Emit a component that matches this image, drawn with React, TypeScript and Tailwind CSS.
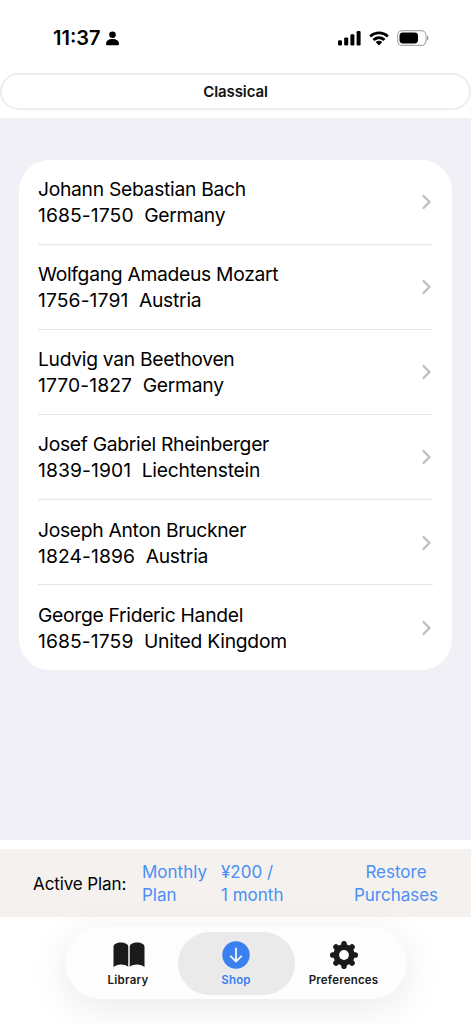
import React from 'react';

type Composer = {
    name: string;
    years: string;
    country: string;
};

const composers: Composer[] = [
    { name: 'Johann Sebastian Bach', years: '1685-1750', country: 'Germany' },
    { name: 'Wolfgang Amadeus Mozart', years: '1756-1791', country: 'Austria' },
    { name: 'Ludvig van Beethoven', years: '1770-1827', country: 'Germany' },
    { name: 'Josef Gabriel Rheinberger', years: '1839-1901', country: 'Liechtenstein' },
    { name: 'Joseph Anton Bruckner', years: '1824-1896', country: 'Austria' },
    { name: 'George Frideric Handel', years: '1685-1759', country: 'United Kingdom' },
];

const StatusBar: React.FC = () => (
    <div className="flex h-[73px] items-start justify-between pl-[53px] pr-[42px] pt-[26px]">
        <div className="flex items-center">
            <span className="w-[53px] whitespace-nowrap text-[20px] font-semibold leading-6">11:37</span>
            <svg className="h-[15px] w-[13px]" viewBox="0 0 13 15">
                <circle cx="6.5" cy="3.8" r="3.3" />
                <path d="M0 13C0 10 2.7 8.1 6.5 8.1S13 10 13 13c0 .8-.4 1.2-1.2 1.2H1.2C.4 14.2 0 13.8 0 13z" />
            </svg>
        </div>
        <div className="flex h-6 items-center">
            <svg className="h-[16px] w-[24px]" viewBox="0 0 24 16">
                <rect x="0" y="10.3" width="4" height="5.2" rx="1.2" />
                <rect x="6.2" y="7.4" width="4" height="8.1" rx="1.2" />
                <rect x="12.4" y="4.3" width="4" height="11.2" rx="1.2" />
                <rect x="18.6" y="1" width="4" height="14.5" rx="1.2" />
            </svg>
            <svg className="ml-[7px] h-[15px] w-[20px]" viewBox="0 0 17 12.3">
                <path d="M8.5 2.6c2.4 0 4.7.9 6.4 2.5.1.1.3.1.5 0l1.2-1.3c.2-.1.2-.4 0-.5C12.1-.9 4.9-.9.4 3.3c-.2.1-.2.4 0 .5l1.2 1.3c.2.1.4.1.5 0C3.8 3.5 6.1 2.6 8.5 2.6zM8.5 6.7c1.3 0 2.6.5 3.5 1.4.2.1.4.1.5 0l1.3-1.3c.1-.2.1-.4 0-.5-3-2.8-7.6-2.8-10.6 0-.1.1-.1.4 0 .5l1.3 1.3c.1.1.4.1.5 0C6 7.2 7.2 6.7 8.5 6.7zM11 9.5c.1-.1.1-.4 0-.5-1.4-1.2-3.6-1.2-5 0-.1.1-.1.4 0 .5l2.3 2.3c.1.1.3.1.4 0z" />
            </svg>
            <svg className="ml-[8px] h-[16px] w-[32px]" viewBox="0 0 32 16">
                <rect x="0.6" y="0.6" width="28.4" height="14.8" rx="4.7" fill="none" stroke="#aaa" strokeWidth="1.1" />
                <rect x="2.5" y="2.5" width="18.5" height="11" rx="3.4" />
                <path d="M30 5.5c1 .4 1.6 1.3 1.6 2.5s-.6 2.1-1.6 2.5z" fill="#999" />
            </svg>
        </div>
    </div>
);

const ComposerRow: React.FC<{ composer: Composer }> = ({ composer }) => (
    <li className="flex h-[85.15px] items-center justify-between border-b border-[#e6e6e6] pr-[1px] pt-[1px] text-[19.3px] leading-[26px] last:border-b-0">
        <div className="whitespace-nowrap">
            <div className="tracking-[-0.3px]">{composer.name}</div>
            <div className="flex gap-[10.5px]">
                <span className="tracking-[0.1px]">{composer.years}</span>
                <span className="tracking-[-0.25px]">{composer.country}</span>
            </div>
        </div>
        <svg className="h-[16px] w-[11px]" viewBox="0 0 11 16" fill="none" stroke="#c0c0c2" strokeWidth="2.4" strokeLinecap="round" strokeLinejoin="round">
            <path d="M2.5 2l6 6-6 6" />
        </svg>
    </li>
);

const PlanBar: React.FC = () => (
    <div className="flex h-[68px] items-center bg-[#f5f1ee] pl-[33px] pt-[2px] text-[17px] leading-[23px] text-[#4b8ff5]">
        <div className="w-[109px] whitespace-nowrap tracking-[-0.1px] text-black">Active Plan:</div>
        <div className="w-[79px]">
            Monthly
            <br />
            Plan
        </div>
        <div className="w-[120px]">
            ¥200 /
            <br />1 month
        </div>
        <div className="w-[110px] text-center">
            Restore
            <br />
            Purchases
        </div>
    </div>
);

const TabBar: React.FC = () => (
    <nav className="ml-[65px] mt-[10px] flex h-[72px] w-[342px] rounded-full bg-[#fdfdfd] p-[4.5px] text-[11.5px] font-semibold leading-[14px] text-[#1a1a1a] shadow-[0_8px_40px_rgba(0,0,0,0.09)]">
        <div className="flex w-[117px] flex-col items-center pt-[10px]">
            <svg className="ml-[2px] h-[26px] w-[32px]" viewBox="0 0 32 26" fill="#1a1a1a">
                <path d="M.5 5C.5 2.4 3.8.6 7.8.6c4.2 0 7.5 1.8 7.5 4.4v19.8c-1.9-1.6-4.3-2.4-7.4-2.4-3 0-5.4.9-7.4 2.5z" />
                <path d="M31.5 5C31.5 2.4 28.2.6 24.2.6c-4.2 0-7.5 1.8-7.5 4.4v19.8c1.9-1.6 4.3-2.4 7.4-2.4 3 0 5.4.9 7.4 2.5z" />
                <path d="M15.3 5h1.4v19h-1.4z" fill="#c9c9c9" />
            </svg>
            <span className="mt-[5px] tracking-[0.25px]">Library</span>
        </div>
        <div className="-ml-[9px] flex w-[117px] flex-col items-center rounded-full bg-[#eaeaea] pt-[9px] text-[#3a80f0]">
            <svg className="h-[28px] w-[28px]" viewBox="0 0 28 28">
                <circle cx="14" cy="14" r="13.7" fill="#3a80f0" />
                <path d="M14 7.5v12.8M8.8 15.3l5.2 5.2 5.2-5.2" fill="none" stroke="#eef3fb" strokeWidth="1.9" strokeLinecap="round" strokeLinejoin="round" />
            </svg>
            <span className="mt-[4px] tracking-[0.2px]">Shop</span>
        </div>
        <div className="-ml-[9px] flex w-[116px] flex-col items-center pt-[9px]">
            <svg className="h-[28px] w-[28px]" viewBox="-14 -14 28 28">
                <g stroke="#1a1a1a" strokeWidth="5.6" strokeLinecap="round">
                    <path d="M0-11.3V11.3M-11.3 0H11.3M-8-8L8 8M8-8L-8 8" />
                </g>
                <circle r="10.7" fill="#1a1a1a" />
                <circle r="4.9" fill="#fdfdfd" />
            </svg>
            <span className="mt-[4px] whitespace-nowrap tracking-[0.2px]">Preferences</span>
        </div>
    </nav>
);

const App: React.FC = () => {
    return (
        <div className="h-[1024px] w-[471px] overflow-hidden bg-white font-['Inter',sans-serif] text-black">
            <StatusBar />
            <div className="flex h-[37px] items-center justify-center rounded-full border-2 border-[#eeeeee] pt-[2px] text-[15px] font-semibold tracking-[-0.1px] text-[#111]">
                Classical
            </div>
            <main className="mt-[8px] h-[722px] bg-[#f1f0f6] px-[19px] pt-[41.5px]">
                <ul className="rounded-[31px] bg-white px-[19px]">
                    {composers.map((composer) => (
                        <ComposerRow key={composer.name} composer={composer} />
                    ))}
                </ul>
            </main>
            <div className="h-[9px]" />
            <PlanBar />
            <TabBar />
        </div>
    );
};

export default App;
